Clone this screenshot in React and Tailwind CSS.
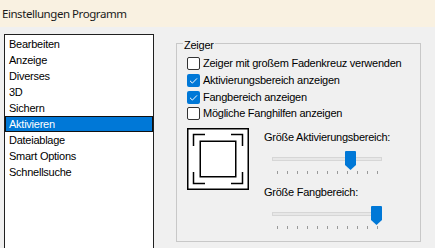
import React from "react";

const items = [
  "Bearbeiten",
  "Anzeige",
  "Diverses",
  "3D",
  "Sichern",
  "Aktivieren",
  "Dateiablage",
  "Smart Options",
  "Schnellsuche",
];

function Checkbox({ checked, label, h }) {
  return (
    <div className={`flex items-center ${h}`}>
      {checked ? (
        <div className="w-[13px] h-[13px] rounded-[2px] bg-[#0078d7] mr-[3px] flex items-center justify-center">
          <svg width="13" height="13" viewBox="0 0 13 13">
            <path d="M3 6.8 L5.4 9.1 L10 4.4" stroke="white" strokeWidth="1" fill="none" />
          </svg>
        </div>
      ) : (
        <div className="w-[13px] h-[13px] rounded-[2px] border border-[#333333] bg-white mr-[3px]" />
      )}
      <span>{label}</span>
    </div>
  );
}

function Slider({ value }) {
  return (
    <div className="relative ml-[8px] w-[110px] h-[24px]">
      <div className="absolute top-[6px] left-0 w-[110px] h-[4px] border border-[#d6d6d6] bg-[#e7e7e7]" />
      <svg
        className="absolute top-0"
        style={{ left: value }}
        width="11"
        height="19"
        viewBox="0 0 11 19"
      >
        <path d="M1 0 H10 Q11 0 11 1 V14 L5.5 19 L0 14 V1 Q0 0 1 0 Z" fill="#0078d7" />
      </svg>
      <div className="absolute top-[20px] left-[5px] w-[101px] h-[3px] flex justify-between">
        {Array.from({ length: 11 }).map((_, i) => (
          <div key={i} className="w-[1px] h-[3px] bg-[#9a9a9a]" />
        ))}
      </div>
    </div>
  );
}

export default function App() {
  return (
    <div className="w-[435px] h-[248px] bg-[#f0f0f0] overflow-hidden text-[#000] font-['Liberation_Sans',Arial,sans-serif] text-[11px] tracking-[-0.25px]">
      <div className="h-[27px] bg-[#f9f1e1] pl-[2px] flex items-center font-['Noto_Sans',sans-serif] text-[11.5px] tracking-[-0.45px] text-[#1a1a1a]">
        Einstellungen Programm
      </div>
      <div className="flex">
        <div className="ml-[4px] mt-[7px] w-[150px] h-[230px] border border-[#202020] bg-white pt-[1px]">
          {items.map((it) =>
            it === "Aktivieren" ? (
              <div
                key={it}
                className="h-[16px] leading-[14px] pl-[3px] bg-[#0078d7] text-white border border-[#111111]"
              >
                {it}
              </div>
            ) : (
              <div key={it} className="h-[16px] leading-[16px] pl-[4px]">
                {it}
              </div>
            )
          )}
        </div>
        <div className="ml-[22px] mt-[16px] w-[245px] h-[199px] border border-[#c8c8c8] relative pl-[10px] pt-[11px]">
          <span className="absolute -top-[5px] left-[6px] px-[1px] bg-[#f0f0f0] leading-[13px]">
            Zeiger
          </span>
          <Checkbox h="h-[17px]" label="Zeiger mit großem Fadenkreuz verwenden" />
          <Checkbox h="h-[17px]" checked label="Aktivierungsbereich anzeigen" />
          <Checkbox h="h-[16px]" checked label="Fangbereich anzeigen" />
          <Checkbox h="h-[17px]" label="Mögliche Fanghilfen anzeigen" />
          <div className="flex mt-[6px]">
            <svg width="62" height="62" viewBox="0 0 62 62">
              <rect x="0.75" y="0.75" width="60.5" height="60.5" fill="white" stroke="black" strokeWidth="1.5" />
              <rect x="13.25" y="13.25" width="35.5" height="35.5" fill="none" stroke="black" strokeWidth="1.5" />
              <path d="M6.5 18 V6.5 H18" fill="none" stroke="black" strokeWidth="1.5" />
              <path d="M44 6.5 H55.5 V18" fill="none" stroke="black" strokeWidth="1.5" />
              <path d="M6.5 44 V55.5 H18" fill="none" stroke="black" strokeWidth="1.5" />
              <path d="M44 55.5 H55.5 V44" fill="none" stroke="black" strokeWidth="1.5" />
            </svg>
            <div className="ml-[15px] mt-[3px] flex flex-col">
              <div className="h-[13px] leading-[13px]">Größe Aktivierungsbereich:</div>
              <div className="mt-[7px]">
                <Slider value={73} />
              </div>
              <div className="mt-[11px] h-[13px] leading-[13px]">Größe Fangbereich:</div>
              <div className="mt-[7px]">
                <Slider value={99} />
              </div>
            </div>
          </div>
        </div>
      </div>
    </div>
  );
}
